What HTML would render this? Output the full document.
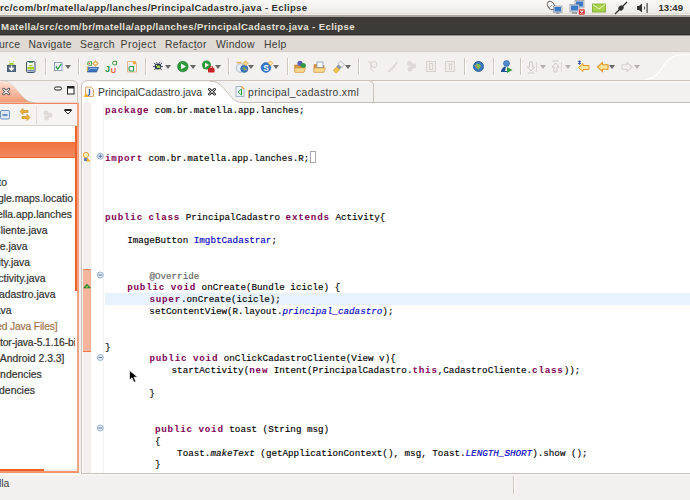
<!DOCTYPE html>
<html><head><meta charset="utf-8">
<style>
html,body{margin:0;padding:0}
body{width:690px;height:500px;overflow:hidden;position:relative;background:#f2f1f0;font-family:"Liberation Sans",sans-serif;}
.a{position:absolute}
.ui{font-family:"Liberation Sans",sans-serif;white-space:nowrap;line-height:1}
svg{position:absolute;overflow:visible}
#toppanel{left:0;top:0;width:690px;height:17px;background:linear-gradient(to bottom,#f9f8f7 0px,#efedea 13px,#e4ddd4 13px,#e4ddd4 14.5px,#f3f0ec 14.5px,#f3f0ec 15.5px,#a9a6a0 15.5px,#a9a6a0 17px)}
#ttl1{left:0px;top:3px;font-size:9.6px;font-weight:bold;letter-spacing:0.35px;color:#33322e}
#darkbar{left:0;top:17px;width:690px;height:19px;background:linear-gradient(to bottom,#3c3b37 0px,#3c3b37 17px,#2e2d2a 17px,#2e2d2a 18px,#9a968f 18px)}
#ttl2{left:1px;top:5px;font-size:9.6px;font-weight:bold;letter-spacing:0.39px;color:#e6e2da}
#menubar{left:0;top:36px;width:690px;height:16px;background:linear-gradient(to bottom,#dfdad3 0,#dfdad3 15px,#d6d0c8 15px)}
#menubar span{position:absolute;top:4px;font-size:10.4px;color:#3c3b37;letter-spacing:0.3px}
#toolbar{left:0;top:52px;width:690px;height:28px;background:#f2f1f0}
.sep{position:absolute;top:6px;width:1px;height:17px;background:#cdc7bf;border-right:1px solid #fff}
.dd{position:absolute;top:13px;width:0;height:0;border-left:3px solid transparent;border-right:3px solid transparent;border-top:4px solid #666}
.dd.dis{border-top-color:#b5b1ac}
/* left panel */
#lplist{left:0;top:126px;width:77px;height:343px;background:#fff}
#lptb{left:0;top:104px;width:77px;height:21px;background:#f5f4f2;border-bottom:1px solid #d9d3cb}
#sel{left:0;top:142px;width:77px;height:16px;background:linear-gradient(#f07240,#f28a5e);border-bottom:1px solid #ea6632;box-sizing:border-box}
.li{position:absolute;font-size:10.4px;color:#33322f;-webkit-text-stroke:0.2px;white-space:nowrap;line-height:16px;height:16px}
#lpclip{left:0;top:126px;width:75px;height:343px;overflow:hidden}
/* editor */
#code{left:82px;top:103px;width:608px;height:370px;background:#fff;overflow:hidden}
#gut1{left:1px;top:0;width:8px;height:370px;background:#f1f0ee}
#gutl{left:21px;top:0;width:1px;height:370px;background:#f2f2f2}
.cl{position:absolute;left:105px;font-family:"Liberation Mono",monospace;font-size:9.85px;line-height:11.78px;height:11.78px;white-space:pre;color:#000;transform:scaleX(0.939);transform-origin:0 0;-webkit-text-stroke:0.15px}
.k{color:#7f0055;font-weight:bold;letter-spacing:0.83px;-webkit-text-stroke:0}
.f{color:#0000c0}
.i{font-style:italic}
.an{color:#646464}
.box{display:inline-block;width:5px;height:10px;border:1px solid #a0a0a0;vertical-align:-2px;margin-left:1px}
#hl{left:105px;top:293px;width:600px;height:11.5px;background:#e8f2fe}
#status{left:0;top:474px;width:690px;height:26px;background:#f2f1f0}
</style></head><body>

<div id="toppanel" class="a">
  <div id="ttl1" class="a ui">rc/com/br/matella/app/lanches/PrincipalCadastro.java - Eclipse</div>
  <svg width="690" height="16" viewBox="0 0 690 16" style="left:0;top:0">
    <!-- network dish icon -->
    <ellipse cx="551" cy="5.5" rx="3.2" ry="4.6" fill="#f4f4f4" stroke="#6a6a6a" stroke-width="1" transform="rotate(-35 551 5.5)"/>
    <path d="M549 8 L552 5" stroke="#888" stroke-width="0.8"/>
    <rect x="553.5" y="6" width="8.5" height="6.5" fill="#d8dce0" stroke="#8a8e94" stroke-width="0.6"/>
    <rect x="554.5" y="7" width="6.5" height="4.5" fill="#3a78c8"/>
    <rect x="556" y="12.5" width="3.5" height="1.5" fill="#9a9ea4"/>
    <!-- network X icon -->
    <rect x="575" y="0.5" width="9" height="7.5" fill="#d8dce0" stroke="#8a8e94" stroke-width="0.6"/>
    <rect x="576" y="1.5" width="7" height="5" fill="#3a78c8"/>
    <rect x="570" y="4.5" width="9" height="7.5" fill="#d8dce0" stroke="#8a8e94" stroke-width="0.6"/>
    <rect x="571" y="5.5" width="7" height="5" fill="#3a78c8"/>
    <rect x="572" y="12" width="5" height="2" fill="#a0a4aa"/>
    <rect x="578.5" y="9" width="6.5" height="6" rx="1" fill="#d42020" stroke="#fff" stroke-width="0.6"/>
    <path d="M580.3 10.5 L583.3 13.5 M583.3 10.5 L580.3 13.5" stroke="#fff" stroke-width="1.1"/>
    <!-- mail -->
    <rect x="592.5" y="4" width="13" height="8" fill="#a6d14a" stroke="#7aa62a" stroke-width="0.8"/>
    <path d="M592.8 4.5 L599 9 L605.2 4.5" fill="none" stroke="#e8f5c0" stroke-width="1"/>
    <!-- plug -->
    <path d="M615 14 L619 10 M623 6 L627 2" stroke="#333" stroke-width="1.3"/>
    <ellipse cx="621" cy="8" rx="3" ry="2.3" fill="#333" transform="rotate(-45 621 8)"/>
    <!-- volume -->
    <path d="M637 6 L639 6 L642 3.5 L642 12.5 L639 10 L637 10 Z" fill="#333"/>
    <rect x="644" y="6.5" width="1" height="3" fill="#555"/>
    <rect x="646.5" y="3" width="1.2" height="10" fill="#444"/>
  </svg>
  <div class="a ui" style="left:658.5px;top:3px;font-size:9.6px;font-weight:bold;letter-spacing:0px;color:#33322e">13:49</div>
</div>

<div id="darkbar" class="a">
  <div id="ttl2" class="a ui">Matella/src/com/br/matella/app/lanches/PrincipalCadastro.java - Eclipse</div>
</div>

<div id="menubar" class="a ui">
  <span style="left:-1px">urce</span>
  <span style="left:28.5px">Navigate</span>
  <span style="left:80px">Se<u style="text-decoration:underline;text-decoration-thickness:1px;text-decoration-color:#8a8680;text-underline-offset:1px">a</u>rch</span>
  <span style="left:120.5px;letter-spacing:0.5px">Project</span>
  <span style="left:165px">Refac<u style="text-decoration:underline;text-decoration-thickness:1px;text-decoration-color:#8a8680;text-underline-offset:1px">t</u>or</span>
  <span style="left:216px">Window</span>
  <span style="left:264px">Help</span>
</div>

<div id="toolbar" class="a">
  <div class="sep" style="left:45px"></div>
  <div class="sep" style="left:78px"></div>
  <div class="sep" style="left:145px"></div>
  <div class="sep" style="left:228px"></div>
  <div class="sep" style="left:287px"></div>
  <div class="sep" style="left:358px"></div>
  <div class="sep" style="left:464px"></div>
  <div class="sep" style="left:493px"></div>
  <div class="sep" style="left:520px"></div>
  <div class="dd" style="left:65px"></div>
  <div class="dd" style="left:165px"></div>
  <div class="dd" style="left:190px"></div>
  <div class="dd" style="left:215px"></div>
  <div class="dd" style="left:248px"></div>
  <div class="dd" style="left:273px"></div>
  <div class="dd" style="left:345px"></div>
  <div class="dd dis" style="left:540px"></div>
  <div class="dd dis" style="left:565px"></div>
  <div class="dd" style="left:609px"></div>
  <div class="dd dis" style="left:634px"></div>
  <svg width="690" height="28" viewBox="0 52 690 28" style="left:0;top:0">
    <!-- perspective curve -->
    <path d="M645 80 C660 80 662 62 672 57 C676 55 680 54.5 690 54.5 L690 80 Z" fill="#f5f4f3"/>
    <path d="M645 79.5 C660 79.5 662 62 672 57 C676 55 680 54.5 690 54.5" fill="none" stroke="#fff" stroke-width="1.2"/>
    <!-- 1 sdk manager -->
    <path d="M8 64.8 Q11.5 60.8 15 64.8 Z" fill="#9ccb1c"/>
    <path d="M9 61 L10 62.3 M14 61 L13 62.3" stroke="#9ccb1c" stroke-width="0.8"/>
    <rect x="7" y="65" width="9" height="7" fill="#4a5e78"/>
    <rect x="8" y="66" width="7" height="5" fill="#5a6e88"/>
    <path d="M11.5 65.5 L11.5 70 M9.3 67.8 L11.5 70.3 L13.7 67.8" stroke="#fff" stroke-width="1.4" fill="none"/>
    <!-- 2 avd manager -->
    <rect x="26.5" y="61.5" width="8.5" height="11" rx="1.3" fill="#f4f6f8" stroke="#3f5068" stroke-width="1"/>
    <path d="M28 66.3 Q30.75 63.5 33.5 66.3 Z" fill="#98c41c"/>
    <rect x="27.5" y="67" width="6.5" height="2.5" fill="#a8d020"/>
    <rect x="27.5" y="70" width="6.5" height="1.5" fill="#6a86b0"/>
    <rect x="29" y="61.8" width="4" height="1" fill="#3aa040"/>
    <!-- 3 checkbox -->
    <rect x="54.5" y="62.5" width="7.5" height="8" fill="#f2f6fb" stroke="#8ea2bf" stroke-width="1"/>
    <path d="M55.8 66.5 L57.8 69 L61.3 64" stroke="#1f9a3a" stroke-width="1.3" fill="none"/>
    <!-- 4 new android project -->
    <path d="M87.5 67 L87.5 72 L96.5 72 L98.5 67.5 L89.5 67.5 Z" fill="#3f74c0" stroke="#2a5798" stroke-width="0.7"/>
    <path d="M88.5 70.5 L90 68.5 L97 68.5" stroke="#9cc0ec" stroke-width="0.8" fill="none"/>
    <path d="M87.3 66.5 L87.3 71" stroke="#f2c230" stroke-width="1"/>
    <path d="M91.5 61.8 L89 61.8 Q87.5 61.8 87.5 63.5 Q87.5 65.3 89 65.3 L91.5 65.3 L91.5 61.5" stroke="#3a9a3a" stroke-width="0.9" fill="none"/>
    <circle cx="89.3" cy="63.5" r="0.7" fill="#d04030"/>
    <path d="M95.5 60.8 L98.3 63.5 L95.5 66.2 L92.7 63.5 Z" fill="#f6c87a" stroke="#e0902a" stroke-width="0.8"/>
    <path d="M94.2 63.5 L96.8 63.5" stroke="#fff" stroke-width="0.8"/>
    <!-- 5 junit -->
    <text x="105" y="72.3" font-family="Liberation Sans" font-weight="bold" font-size="9" fill="#22984a">J</text>
    <text x="110.8" y="72.5" font-family="Liberation Sans" font-weight="bold" font-size="7.5" fill="#ee5a3a">U</text>
    <path d="M116.5 61.3 L114 61.3 Q112.5 61.3 112.5 63 Q112.5 64.8 114 64.8 L116.5 64.8 L116.5 61" stroke="#3a9a3a" stroke-width="0.9" fill="none"/>
    <!-- 6 android xml -->
    <path d="M127.5 61.5 L134 61.5 L136.5 64 L136.5 72 L127.5 72 Z" fill="#eef2f6" stroke="#e0a870" stroke-width="0.8"/>
    <circle cx="134.5" cy="62.8" r="1.7" fill="#f4a640"/>
    <path d="M133.5 66.5 L130.5 66.5 Q129 66.5 129 68.8 Q129 71 130.5 71 L133.5 71 L133.5 66" stroke="#2f9a4a" stroke-width="1.1" fill="none"/>
    <!-- 7 debug -->
    <path d="M154 63 L162 70 M162 63 L154 70 M153 66.5 L163 66.5 M156 62 L157 63.5 M160 62 L159 63.5" stroke="#2a3550" stroke-width="0.8"/>
    <ellipse cx="158" cy="66.5" rx="3.3" ry="3" fill="#25304c"/>
    <ellipse cx="158.5" cy="66.8" rx="2" ry="1.5" fill="#9fd04a"/>
    <circle cx="156.5" cy="65.5" r="0.7" fill="#cde890"/>
    <!-- 8 run -->
    <circle cx="182.8" cy="66.5" r="5.3" fill="#2d9a3a" stroke="#1c7a2a" stroke-width="0.6"/>
    <path d="M181 63.5 L186 66.5 L181 69.5 Z" fill="#fff"/>
    <!-- 9 ext tools -->
    <circle cx="206.5" cy="65" r="4.5" fill="#2d9a3a"/>
    <path d="M205 62.5 L209 65 L205 67.5 Z" fill="#fff"/>
    <rect x="208" y="68" width="6.5" height="4.5" rx="0.8" fill="#c82028"/>
    <rect x="209.8" y="66.8" width="3" height="1.5" fill="none" stroke="#c82028" stroke-width="0.8"/>
    <!-- 10 globe sparkle -->
    <circle cx="240.5" cy="68" r="4.3" fill="#e4ecf2" stroke="#9fb2c4" stroke-width="0.8"/>
    <circle cx="244.3" cy="68.8" r="3.6" fill="#3d78c4" stroke="#27569a" stroke-width="0.6"/>
    <path d="M242.5 68 Q244 66.5 245.5 68 L244.5 71 Z" fill="#7fb83a"/>
    <path d="M245 69 L247 70" stroke="#f0a030" stroke-width="0.9"/>
    <path d="M245.5 60.8 L248 63.3 L245.5 65.8 L243 63.3 Z" fill="#f8d890" stroke="#e8a030" stroke-width="0.8"/>
    <rect x="236.5" y="61.8" width="5" height="1.6" fill="#eab060"/>
    <!-- 11 S circle -->
    <circle cx="266" cy="67.5" r="4.9" fill="#2f76c6" stroke="#2060a8" stroke-width="0.5"/>
    <text x="263.2" y="70.8" font-family="Liberation Sans" font-weight="bold" font-size="8.5" fill="#fff">S</text>
    <path d="M270.5 60.8 L272.8 63.2 L270.5 65.6 L268.2 63.2 Z" fill="#fbe6b0" stroke="#eea33a" stroke-width="0.8"/>
    <!-- 12 folder balls -->
    <path d="M294.5 65 L298 65 L299 66 L304 66 L304 72 L295 72 Z" fill="#d8983e" stroke="#b87a2a" stroke-width="0.5"/>
    <circle cx="300" cy="63.3" r="2.6" fill="#5a5eb4"/>
    <circle cx="303.3" cy="65.5" r="2.6" fill="#2f9a46"/>
    <path d="M294.5 68 L305.5 68 L304 72.3 L295 72.3 Z" fill="#fbd98e" stroke="#d09040" stroke-width="0.6"/>
    <!-- 13 folder open -->
    <path d="M314 64.5 L317.5 64.5 L318.5 65.5 L324 65.5 L324 72 L314 72 Z" fill="#d8983e" stroke="#b87a2a" stroke-width="0.5"/>
    <rect x="317" y="62" width="6" height="5.5" fill="#f6f8fc" stroke="#7090c0" stroke-width="0.7"/>
    <path d="M313.8 68 L325.5 68 L324 72.3 L314 72.3 Z" fill="#fbd98e" stroke="#d09040" stroke-width="0.6"/>
    <!-- 14 flashlight -->
    <g transform="rotate(-50 339 67)">
      <rect x="332.5" y="65" width="5" height="4" rx="0.5" fill="#f8c850" stroke="#e09a2a" stroke-width="0.6"/>
      <rect x="337.5" y="64.8" width="3" height="4.4" fill="#8a94a2"/>
      <rect x="340.5" y="64.3" width="4" height="5.4" rx="0.5" fill="#eef0f2" stroke="#a0a8b4" stroke-width="0.6"/>
    </g>
    <!-- disabled icons -->
    <g fill="#efedea" stroke="#d6d2cd" stroke-width="1">
      <circle cx="374" cy="64.5" r="3"/><path d="M368 62 L371 62 L371 70 M371 69 L374 72"/>
      <path d="M388 72 L397 62 Q394 70 388 72 Z"/>
      <rect x="426.5" y="61.5" width="9" height="10"/><rect x="429.5" y="63.5" width="3" height="6"/>
      <rect x="445.5" y="61.5" width="9" height="10"/><path d="M448 64 L453 64 M449.5 64 L449.5 70 M451.5 64 L451.5 70"/>
    </g>
    <g fill="#dcd9d6">
      <circle cx="409.5" cy="63.5" r="2.5"/><circle cx="413.5" cy="66" r="2.5"/><circle cx="410" cy="69" r="2.5"/>
    </g>
    <!-- 20 globe -->
    <circle cx="478.5" cy="66.5" r="5" fill="#3a78c0" stroke="#1f4f8a" stroke-width="0.8"/>
    <path d="M476 64 Q479 63 481 66 L478 70 Z" fill="#8abf40"/>
    <path d="M475 65 L477 68" stroke="#e8a040" stroke-width="1"/>
    <!-- 21 person play -->
    <circle cx="506.5" cy="63.5" r="3" fill="#4f8ad0" stroke="#2a5a98" stroke-width="0.6"/>
    <path d="M501 71 Q503 66 506 67 L505 71 Z" fill="#1f4f9a"/>
    <path d="M501 71.5 L507 71.5" stroke="#1f4f9a" stroke-width="1"/>
    <path d="M507 67 L512.5 70 L507 73 Z" fill="#2d9a3a"/>
    <!-- 22/23 disabled arrows -->
    <g fill="none" stroke="#cdc9c4" stroke-width="1">
      <path d="M529.5 62 L532.5 62 L532.5 67 L534.5 67 L531 71 L527.5 67 L529.5 67 Z"/>
      <path d="M528 73 L534 73"/>
      <path d="M554 72 L557 72 L557 67 L559 67 L555.5 63 L552 67 L554 67 Z"/>
      <path d="M552.5 61 L558.5 61"/>
    </g>
    <path d="M536.5 62 L536.5 72 M561.5 62 L561.5 72" stroke="#dcd8d3" stroke-width="1"/>
    <!-- 24 last edit -->
    <path d="M578.5 67.5 L583 63.5 L583 65.5 L589 65.5 L589 69.5 L583 69.5 L583 71.5 Z" fill="#fde7a0" stroke="#e0962a" stroke-width="1"/>
    <path d="M578 61 L581 64 M581 61 L578 64 M579.5 60.5 L579.5 64.5" stroke="#3a5aa8" stroke-width="1"/>
    <!-- 25 back -->
    <path d="M597.5 67 L602.5 62.5 L602.5 64.8 L608 64.8 L608 69.2 L602.5 69.2 L602.5 71.5 Z" fill="#fde7a0" stroke="#e0962a" stroke-width="1.1"/>
    <!-- 26 forward disabled -->
    <path d="M632 67 L627 62.5 L627 64.8 L622 64.8 L622 69.2 L627 69.2 L627 71.5 Z" fill="none" stroke="#d6d2cd" stroke-width="1.1"/>
  </svg>
</div>

<!-- panels frame svg -->
<svg width="690" height="30" viewBox="0 76 690 30" style="left:0;top:76px">
  <defs>
    <linearGradient id="og" x1="0" y1="0" x2="0" y2="1">
      <stop offset="0" stop-color="#fadfd2"/><stop offset="1" stop-color="#f39a76"/>
    </linearGradient>
  </defs>
  <!-- left panel tab row -->
  <path d="M-2 80.5 L72 80.5 Q77.5 80.5 77.5 86 L77.5 106" fill="#f2f1f0" stroke="#cfc8bf" stroke-width="1"/>
  <path d="M-2 81.5 L3 81.5 C9 81.5 12 84 17 90 C23 97 27 102.5 35 102.5 L-2 102.5 Z" fill="url(#og)"/>
  <path d="M2 81 C9 81 12 84 17 90 C23 97 27 102.5 35 102.5" fill="none" stroke="#c9c1b8" stroke-width="0.8"/>
  <path d="M3 82 C9.5 82 12.5 84.8 17.8 90.5 C23.5 97 27.5 101.5 35 101.5" fill="none" stroke="#fff" stroke-width="0.7" stroke-opacity="0.7"/>
  <path d="M0 103.5 L77.5 103.5" stroke="#f08a5e" stroke-width="1.3"/>
  <!-- X close on orange tab -->
  <path d="M3.5 89 L9 94 M9 89 L3.5 94" stroke="#2a2a2a" stroke-width="2.4" stroke-linecap="round"/>
  <path d="M3.5 89 L9 94 M9 89 L3.5 94" stroke="#fff" stroke-width="1.1" stroke-linecap="round"/>
  <!-- minimize / maximize -->
  <rect x="54.5" y="87" width="7" height="3" rx="1.5" fill="#fff" stroke="#222" stroke-width="1"/>
  <rect x="67.5" y="86.5" width="6.5" height="7.5" fill="#fff" stroke="#222" stroke-width="1"/>
  <rect x="67.5" y="86.5" width="6.5" height="2" fill="#222"/>

  <!-- editor tab row -->
  <path d="M81.5 106 L81.5 87 Q81.5 80.5 88 80.5 L690 80.5" fill="#f2f1f0" stroke="#cdc5bd" stroke-width="1"/>
  <path d="M82 103 L82 87.5 Q82 81.5 88 81.5 L209 81.5 C217 81.5 220 84 226 91 C232 98 235 102 242 102 L690 102 L690 103 Z" fill="#ffffff"/>
  <path d="M236 82 L690 82" stroke="#fcfbfa" stroke-width="1"/>
  <path d="M209 81 C217 81 220 84 226 91 C232 98 235 102.5 242 102.5 L690 102.5" fill="none" stroke="#c6beb5" stroke-width="1"/>
  <path d="M373.5 102 L373.5 85 Q373.5 81.5 370 81.5" fill="none" stroke="#cbc3ba" stroke-width="1"/>
  <!-- tab close -->
  <path d="M209.3 89.3 L214.7 94.2 M214.7 89.3 L209.3 94.2" stroke="#1a1a1a" stroke-width="2.5" stroke-linecap="round"/>
  <path d="M209.3 89.3 L214.7 94.2 M214.7 89.3 L209.3 94.2" stroke="#fff" stroke-width="1" stroke-linecap="round"/>
  <!-- java icon -->
  <path d="M85.5 87 L91 87 L93.5 89.5 L93.5 96.5 L85.5 96.5 Z" fill="#fbf3e6" stroke="#d0954a" stroke-width="0.8"/>
  <path d="M89.5 89 L89.5 94 Q89.5 95.5 87.5 95.5" stroke="#2a5ab8" stroke-width="1.3" fill="none"/>
  <path d="M83.5 97 L86 92.5 L88.5 97 Z" fill="#f0b030"/>
  <!-- xml icon -->
  <path d="M236 86.5 L241.5 86.5 L244 89 L244 96.5 L236 96.5 Z" fill="#eef3fa" stroke="#8fa6c4" stroke-width="0.8"/>
  <path d="M241.5 86.5 L244 89" stroke="#f0a030" stroke-width="1.2"/>
  <path d="M238 92 L241.5 89 L241.5 95 M238 92 L241.5 95" stroke="#2f9f4a" stroke-width="1" fill="none"/>
</svg>
<div class="a ui" style="left:98px;top:88px;font-size:10.4px;color:#3c3b37">PrincipalCadastro.java</div>
<div class="a ui" style="left:248px;top:88px;font-size:10.4px;color:#3c3b37;letter-spacing:0.35px">principal_cadastro.xml</div>

<!-- left panel body -->
<div id="lptb" class="a"></div>
<svg width="78" height="24" viewBox="0 103 78 24" style="left:0;top:103px">
  <!-- collapse all -->
  <rect x="0.5" y="110.5" width="9" height="8.5" rx="1.5" fill="#dfe9f6" stroke="#6f91c0" stroke-width="1"/>
  <path d="M2.5 115 L7.5 115" stroke="#2f5fa8" stroke-width="1.3"/>
  <!-- link with editor -->
  <path d="M20 111.5 L23 108.5 L23 110.5 L28 110.5 L28 112.5 L23 112.5 L23 114.5 Z" fill="#f2b43a" stroke="#cf8a1e" stroke-width="0.7"/>
  <path d="M30 117.5 L27 114.5 L27 116.5 L22 116.5 L22 118.5 L27 118.5 L27 120.5 Z" fill="#f2b43a" stroke="#cf8a1e" stroke-width="0.7"/>
  <path d="M36.5 106 L36.5 124" stroke="#e2ddd6" stroke-width="1"/>
  <g fill="#dedbd8"><circle cx="46" cy="113" r="2.5"/><circle cx="50" cy="115" r="2.5"/><circle cx="46.5" cy="118" r="2.5"/></g>
  <path d="M64.5 110.5 L71.5 110.5 L68 114 Z" fill="#fff" stroke="#222" stroke-width="1" stroke-linejoin="round"/>
  <path d="M64.5 109.5 L71.5 109.5" stroke="#222" stroke-width="1"/>
</svg>
<div id="lplist" class="a"></div>
<div id="sel" class="a"></div>
<div id="lpclip" class="a">
  <div class="li ui" style="right:68px;top:49px">eto</div>
  <div class="li ui" style="right:2px;top:65px">ogle.maps.locatio</div>
  <div class="li ui" style="right:3px;top:81px">atella.app.lanches</div>
  <div class="li ui" style="right:27.5px;top:97px">Cliente.java</div>
  <div class="li ui" style="right:47.5px;top:113px">nte.java</div>
  <div class="li ui" style="right:45px;top:129px">ity.java</div>
  <div class="li ui" style="right:29.5px;top:145px">ctivity.java</div>
  <div class="li ui" style="right:19.5px;top:161px">Cadastro.java</div>
  <div class="li ui" style="right:63.5px;top:177px">java</div>
  <div class="li ui" style="right:17.5px;top:193px;color:#a0744a;letter-spacing:-0.2px">ed Java Files]</div>
  <div class="li ui" style="left:0px;top:209px;letter-spacing:-0.15px">tor-java-5.1.16-bin.jar</div>
  <div class="li ui" style="right:10.5px;top:225px">[Android 2.3.3]</div>
  <div class="li ui" style="right:33.3px;top:241px">endencies</div>
  <div class="li ui" style="right:40.1px;top:257px">pendencies</div>
</div>
<div class="a" style="left:77px;top:103px;width:1.5px;height:370px;background:#f5a282"></div>
<div class="a" style="left:75px;top:126px;width:2px;height:165px;background:#f0622c"></div>
<div class="a" style="left:0;top:471px;width:78.5px;height:2px;background:#f29670"></div>
<div class="a" style="left:0;top:469px;width:44px;height:2px;background:#f0622c"></div>

<!-- editor body -->
<div class="a" style="left:81px;top:103px;width:1.2px;height:370px;background:#c9c2ba"></div>
<div class="a" style="left:81px;top:473px;width:609px;height:1px;background:#c9c1b9"></div>
<div id="code" class="a">
  <div id="gut1" class="a"></div>
  <div id="gutl" class="a"></div>
</div>
<div class="a" style="left:83px;top:269px;width:8px;height:83px;background:#f5b49b;border-top:1px solid #f08a5c;border-bottom:1px solid #f0783f;box-sizing:border-box"></div>
<div id="hl" class="a"></div>
<svg width="40" height="370" viewBox="80 103 40 370" style="left:80px;top:103px">
  <!-- warning bulb on import -->
  <circle cx="86" cy="155" r="2.6" fill="#fbf0c8" stroke="#e0a030" stroke-width="1"/>
  <path d="M86.5 157 L91 161.5 L86.5 161.5 Z" fill="#f0b030"/>
  <rect x="84" y="158" width="3" height="3" fill="#6a80b0"/>
  <!-- fold markers -->
  <g fill="#e4ecf6" stroke="#8ea8cc" stroke-width="0.9">
    <circle cx="100.3" cy="156.2" r="3"/>
    <circle cx="100.3" cy="275" r="3"/>
    <circle cx="100.3" cy="357.5" r="3"/>
    <circle cx="100.3" cy="428" r="3"/>
  </g>
  <g stroke="#4a6a9a" stroke-width="0.9">
    <path d="M98.5 156.2 L102.1 156.2 M100.3 154.4 L100.3 158"/>
    <path d="M98.5 275 L102.1 275"/>
    <path d="M98.5 357.5 L102.1 357.5"/>
    <path d="M98.5 428 L102.1 428"/>
  </g>
  <!-- green triangle -->
  <path d="M83.5 288 L87 284 L90.5 288 Z" fill="#2f9a3a" stroke="#1f6a2a" stroke-width="0.5"/>
  <rect x="86" y="286.5" width="2" height="1" fill="#d8d040"/>
</svg>
<div class="cl" style="top:105px"><span class=k>package</span> com.br.matella.app.lanches;</div>
<div class="cl" style="top:153px"><span class=k>import</span> com.br.matella.app.lanches.R;</div>
<div class="cl" style="top:212px"><span class=k>public</span> <span class=k>class</span> PrincipalCadastro <span class=k>extends</span> Activity{</div>
<div class="cl" style="top:235px">    ImageButton <span class=f>ImgbtCadastrar</span>;</div>
<div class="cl" style="top:271px">        <span class=an>@Override</span></div>
<div class="cl" style="top:282px">    <span class=k>public</span> <span class=k>void</span> onCreate(Bundle icicle) {</div>
<div class="cl" style="top:294px">        <span class=k>super</span>.onCreate(icicle);</div>
<div class="cl" style="top:306px">        setContentView(R.layout.<span class="f i">principal_cadastro</span>);</div>
<div class="cl" style="top:342px">}</div>
<div class="cl" style="top:353px">        <span class=k>public</span> <span class=k>void</span> onClickCadastroCliente(View v){</div>
<div class="cl" style="top:365px">            startActivity(<span class=k>new</span> Intent(PrincipalCadastro.<span class=k>this</span>,CadastroCliente.<span class=k>class</span>));</div>
<div class="cl" style="top:388px">        }</div>
<div class="cl" style="top:424px">         <span class=k>public</span> <span class=k>void</span> toast (String msg)</div>
<div class="cl" style="top:436px">         {</div>
<div class="cl" style="top:448px">             Toast.<span class=i>makeText</span> (getApplicationContext(), msg, Toast.<span class="f i">LENGTH_SHORT</span>).show ();</div>
<div class="cl" style="top:459px">         }</div>
<div class="a" style="left:310px;top:151px;width:4px;height:9.5px;border:1px solid #a8a8a8"></div>
<!-- mouse cursor -->
<svg width="12" height="16" viewBox="0 0 12 16" style="left:128px;top:369px">
  <path d="M1.5 1.5 L1.5 11 L4 8.8 L6 13.3 L7.8 12.5 L5.9 8.2 L9.5 8 Z" fill="#000" stroke="#fff" stroke-width="0.8" stroke-opacity="0.8"/>
</svg>

<div id="status" class="a">
  <div class="a" style="left:0;top:0;width:690px;height:1px;background:#fbfaf9"></div>
  <div class="sep" style="left:513px;top:2px;height:18px"></div>
  <div class="a ui" style="left:-1px;top:5px;font-size:10.4px;color:#3c3b37">lla</div>
</div>

</body></html>
